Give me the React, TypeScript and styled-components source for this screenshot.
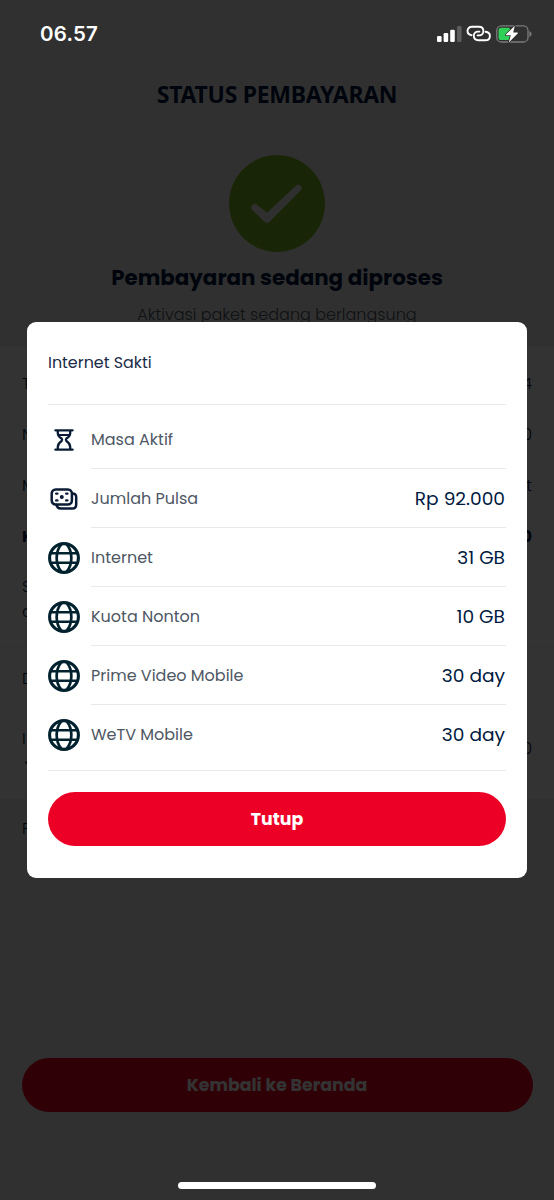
import React from "react";
import styled, { createGlobalStyle } from "styled-components";

const GlobalStyle = createGlobalStyle`
  * { box-sizing: border-box; }
  body {
    margin: 0;
    background: #303030;
    font-family: Poppins, Inter, "Liberation Sans", sans-serif;
    color: #001a41;
  }
`;

const Screen = styled.div`
  position: relative;
  width: 554px;
  height: 1200px;
  overflow: hidden;
  background: #f1f1f1;
`;

const Page = styled.main`
  display: flex;
  flex-direction: column;
  height: 100%;
  padding-top: 67px;
`;

const Label = styled.span<{ $size: number; $weight?: number; $color?: string }>`
  font-size: ${(p) => p.$size}px;
  font-weight: ${(p) => p.$weight ?? 400};
  color: ${(p) => p.$color ?? "inherit"};
  line-height: 28px;
  white-space: nowrap;
`;

const Clock = styled.time`
  font: 600 20.5px/28px Inter, sans-serif;
  letter-spacing: 0.2px;
  color: #fff;
`;

const PageTitle = styled.h1`
  margin: 0;
  height: 54px;
  font: 700 23px/54px "Noto Sans", sans-serif;
  letter-spacing: -0.28px;
  text-align: center;
`;

const Result = styled.section`
  display: flex;
  flex-direction: column;
  align-items: center;
  height: 225px;
  padding-top: 34px;
`;

const ResultHeading = styled.div`
  display: flex;
  flex-direction: column;
  align-items: center;
  gap: 9px;
  margin-top: 12px;
`;

const Section = styled.section<{ $height: number; $top: number }>`
  height: ${(p) => p.$height}px;
  padding: ${(p) => p.$top}px 21px 0;
  background: #fff;
  border-bottom: 1px solid #f1f1f1;
`;

const DetailRow = styled.div<{ $height?: number; $bold?: boolean }>`
  display: flex;
  justify-content: space-between;
  align-items: center;
  height: ${(p) => p.$height ?? 51}px;
  padding: 0 1px;
  font-size: 16px;
  font-weight: ${(p) => (p.$bold ? 700 : 300)};
`;

const Price = styled.span`
  padding-top: 20px;
`;

const Bullet = styled.div`
  width: 3px;
  height: 3px;
  margin: -7px 0 0 4px;
  border-radius: 50%;
  background: #4e5764;
`;

const Footer = styled.section`
  padding: 12px 21px 0;
`;

const PillButton = styled.button`
  display: flex;
  align-items: center;
  justify-content: center;
  width: 100%;
  height: 54px;
  border: 0;
  border-radius: 27px;
  background: #ed0025;
  color: #fff;
  font-family: inherit;
`;

const PageAction = styled.div`
  margin-top: auto;
  padding: 0 21.5px 88px;
`;

const Overlay = styled.div`
  position: absolute;
  inset: 0;
  padding: 322px 27px 0;
  background: rgba(0, 0, 0, 0.8);
`;

const Dialog = styled.div`
  height: 556px;
  padding: 0 21px;
  border-radius: 9px;
  background: #fff;
`;

const DialogTitle = styled.div`
  display: flex;
  align-items: center;
  height: 83px;
  border-bottom: 1px solid #e9e9eb;
`;

const BenefitList = styled.div`
  padding: 5px 0 6px;
  margin-bottom: 21px;
  border-bottom: 1px solid #e9e9eb;
`;

const BenefitRow = styled.div`
  display: flex;
  gap: 11px;
  height: 59px;
  &:last-child > div { border-bottom-color: transparent; }
`;

const IconSlot = styled.span`
  display: flex;
  align-items: center;
  justify-content: center;
  width: 32px;
`;

const BenefitText = styled.div`
  display: flex;
  flex: 1;
  justify-content: space-between;
  align-items: center;
  padding: 2px 1px 0 0;
  border-bottom: 1px solid #e9e9eb;
`;

const StatusBar = styled.header`
  position: absolute;
  inset: 0 0 auto;
  display: flex;
  align-items: center;
  justify-content: space-between;
  height: 67px;
  padding: 0 22px 0 40px;
`;

const StatusIcons = styled.div`
  display: flex;
  align-items: center;
  gap: 4px;
`;

const HomeIndicator = styled.div`
  position: absolute;
  left: 178px;
  bottom: 11px;
  width: 198px;
  height: 7px;
  border-radius: 4px;
  background: #fff;
`;

const CheckCircle = () => (
  <svg width="96" height="97" viewBox="0 0 96 97">
    <ellipse cx="48" cy="48.5" rx="48" ry="48.5" fill="#7fba24" />
    <path d="M27.6 49.6 38 57.8 67.2 30.6Q69.6 28.7 71.6 30.7Q73.5 32.8 71.6 35.4L40.8 66.6Q38 69.4 35.2 66.6L23.4 55.2Q21.2 52.8 22.8 50.6Q25 48 27.6 49.6Z" fill="#ebebeb" />
  </svg>
);

const Hourglass = () => (
  <svg width="20" height="22" viewBox="0 0 20 22" fill="none" stroke="#0a1c35" strokeWidth="2.3" strokeLinecap="round" strokeLinejoin="round">
    <path d="M1.4 1.3H18.6M1.4 20.7H18.6M3.8 1.3V4.2Q4 7.6 7.6 9.6Q8.6 10.8 7.6 12Q4 14.2 3.8 18V20.5M16.2 1.3V4.2Q16 7.6 12.4 9.6Q11.4 10.8 12.4 12Q16 14.2 16.2 18V20.5" />
    <path d="M5 6H15" strokeWidth="1.9" />
  </svg>
);

const CreditCards = () => (
  <svg width="28" height="22" viewBox="0 0 28 22" fill="none" stroke="#0a1c35" strokeWidth="2.5" strokeLinecap="round">
    <rect x="1.7" y="1.4" width="20.2" height="15.2" rx="4" />
    <path d="M22.2 5.5C25 5.5 26.2 6.6 26.2 9V16.5Q26.2 20.6 22 20.6H11Q7.3 20.6 6.5 17" />
    <path d="M6.2 5.6H7.4M16.2 5.6H17.4M6.2 12.4H7.4M16.2 12.4H17.4" strokeWidth="2.4" />
    <circle cx="11.8" cy="9" r="2" fill="#0a1c35" stroke="none" />
  </svg>
);

const Globe = () => (
  <svg width="32" height="32" viewBox="0 0 32 32" fill="none" stroke="#00222f" strokeWidth="2.7">
    <circle cx="16" cy="16" r="14.4" strokeWidth="3.1" />
    <path d="M13.6 1.8C7 9.5 7 22.5 13.6 30.2M18.4 1.8C25 9.5 25 22.5 18.4 30.2" />
    <path d="M2 11.3H30M2 20.8H30" strokeWidth="2.4" />
  </svg>
);

const Signal = () => (
  <svg width="25" height="16" viewBox="0 0 25 16" fill="#fff">
    <rect x="0" y="10" width="4.6" height="6" rx="1.3" />
    <rect x="6.6" y="7" width="4.6" height="9" rx="1.3" />
    <rect x="13.2" y="3.7" width="4.6" height="12.3" rx="1.3" />
    <rect x="20" y="0" width="4.6" height="16" rx="1.3" fill="#5d5d5d" />
  </svg>
);

const HotspotLink = () => (
  <svg width="26" height="17" viewBox="0 0 26 17" fill="none" stroke="#fff" strokeWidth="1.9" strokeLinecap="round">
    <path d="M5.6 10.2C3 9.8 1.5 8.2 1.5 6.1C1.5 3.5 3.3 1.8 6 1.8H12.8C15.6 1.8 17.4 3.7 17.4 6.2C17.4 8.8 15.5 10.6 12.8 10.4H11.6" />
    <path d="M19.6 6.8C22.3 7.2 23.9 8.8 23.9 10.9C23.9 13.5 22.1 15.2 19.4 15.2H12.4C9.6 15.2 7.8 13.3 7.8 10.8C7.8 8.2 9.7 6.4 12.4 6.6H13.4" />
  </svg>
);

const Battery = () => (
  <svg width="36" height="18" viewBox="0 0 36 18">
    <rect x="0.8" y="0.8" width="31.2" height="16.2" rx="4.6" fill="none" stroke="#7b7b7b" strokeWidth="1.3" />
    <path d="M33.4 6Q35.6 6.8 35.6 9T33.4 12Z" fill="#7b7b7b" />
    <rect x="2.6" y="2.7" width="11.8" height="12.4" rx="2.6" fill="#30d158" />
    <path d="M18.8 0.8 9.9 9.6Q9.6 10.2 10.3 10.2H14.8L12.8 17.4 21.9 8.3Q22.2 7.5 21.4 7.5H17.2Z" fill="#fff" stroke="#303030" strokeWidth="1.6" paintOrder="stroke" strokeLinejoin="round" />
  </svg>
);

const benefits = [
  { icon: <Hourglass />, name: "Masa Aktif", value: "" },
  { icon: <CreditCards />, name: "Jumlah Pulsa", value: "Rp 92.000" },
  { icon: <Globe />, name: "Internet", value: "31 GB" },
  { icon: <Globe />, name: "Kuota Nonton", value: "10 GB" },
  { icon: <Globe />, name: "Prime Video Mobile", value: "30 day" },
  { icon: <Globe />, name: "WeTV Mobile", value: "30 day" },
];

export default function App() {
  return (
    <Screen>
      <GlobalStyle />
      <Page>
        <PageTitle>STATUS PEMBAYARAN</PageTitle>
        <Result>
          <CheckCircle />
          <ResultHeading>
            <Label $size={21.4} $weight={700}>Pembayaran sedang diproses</Label>
            <Label $size={16.05} $weight={300} $color="#4e5764">Aktivasi paket sedang berlangsung</Label>
          </ResultHeading>
        </Result>
        <Section $height={301} $top={12}>
          <DetailRow><span>T</span><span>4</span></DetailRow>
          <DetailRow><span>N</span><span>0</span></DetailRow>
          <DetailRow><span>M</span><span>t</span></DetailRow>
          <DetailRow $bold><span>K</span><span>0</span></DetailRow>
          <DetailRow $height={49}><span>S</span></DetailRow>
          <DetailRow $height={1}><span>d</span></DetailRow>
        </Section>
        <Section $height={153} $top={1}>
          <DetailRow $height={60}><span>D</span></DetailRow>
          <DetailRow $height={60}><span>I</span><Price>0</Price></DetailRow>
          <Bullet />
        </Section>
        <Footer>
          <DetailRow $height={32}><span>P</span></DetailRow>
        </Footer>
        <PageAction>
          <PillButton><Label $size={17.4} $weight={700}>Kembali ke Beranda</Label></PillButton>
        </PageAction>
      </Page>

      <Overlay>
        <Dialog role="dialog">
          <DialogTitle><Label $size={15.9} $color="#1c2c48">Internet Sakti</Label></DialogTitle>
          <BenefitList>
            {benefits.map((b) => (
              <BenefitRow key={b.name}>
                <IconSlot>{b.icon}</IconSlot>
                <BenefitText>
                  <Label $size={16} $color="#4e5764">{b.name}</Label>
                  <Label $size={18.6}>{b.value}</Label>
                </BenefitText>
              </BenefitRow>
            ))}
          </BenefitList>
          <PillButton><Label $size={17.3} $weight={700}>Tutup</Label></PillButton>
        </Dialog>
      </Overlay>

      <StatusBar>
        <Clock>06.57</Clock>
        <StatusIcons><Signal /><HotspotLink /><Battery /></StatusIcons>
      </StatusBar>
      <HomeIndicator />
    </Screen>
  );
}
